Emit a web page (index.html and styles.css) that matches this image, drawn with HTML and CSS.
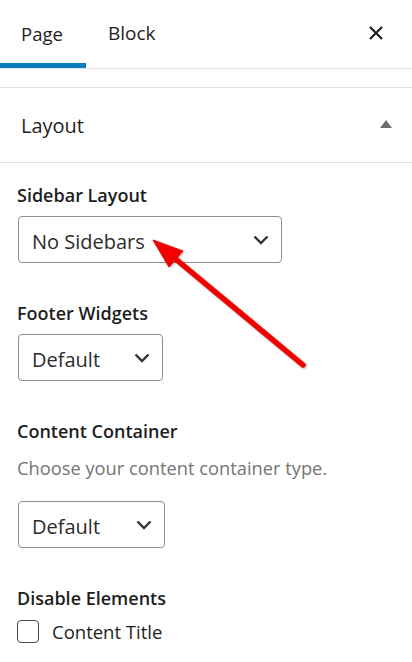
FILE: index.html
```html
<!DOCTYPE html>
<html lang="en">
<head>
<meta charset="utf-8">
<title>Page settings</title>
<link rel="stylesheet" href="styles.css">
</head>
<body>
<div class="sidebar">
  <div class="tabs">
    <div class="tab active">Page</div>
    <div class="tab">Block</div>
    <div class="close">
      <svg width="16" height="16" viewBox="0 0 16 16"><path d="M2 2 L14 14 M14 2 L2 14" stroke="#1e1e1e" stroke-width="2.2" fill="none"/></svg>
    </div>
  </div>
  <div class="spacer"></div>
  <div class="panel-head">
    <span class="panel-title">Layout</span>
    <svg class="caret" width="12" height="8" viewBox="0 0 12 8"><path d="M6 0 L12 8 L0 8 Z" fill="#6e6e6e"/></svg>
  </div>
  <div class="panel-body">
    <div class="field">
      <div class="label">Sidebar Layout</div>
      <div class="select wide"><span>No Sidebars</span><svg class="chev" width="16" height="10" viewBox="0 0 16 10"><path d="M1.5 1.5 L8 8 L14.5 1.5" stroke="#333" stroke-width="2.4" fill="none"/></svg></div>
    </div>
    <div class="field">
      <div class="label">Footer Widgets</div>
      <div class="select narrow"><span>Default</span><svg class="chev" width="16" height="10" viewBox="0 0 16 10"><path d="M1.5 1.5 L8 8 L14.5 1.5" stroke="#333" stroke-width="2.4" fill="none"/></svg></div>
    </div>
    <div class="field">
      <div class="label">Content Container</div>
      <div class="help">Choose your content container type.</div>
      <div class="select narrow2"><span>Default</span><svg class="chev" width="16" height="10" viewBox="0 0 16 10"><path d="M1.5 1.5 L8 8 L14.5 1.5" stroke="#333" stroke-width="2.4" fill="none"/></svg></div>
    </div>
    <div class="field">
      <div class="label">Disable Elements</div>
      <label class="check"><span class="box"></span><span>Content Title</span></label>
    </div>
  </div>
  <svg class="arrow" width="412" height="662" viewBox="0 0 412 662">
    <g fill="#f20000" stroke="#f20000">
      <line x1="303" y1="365" x2="172" y2="256" stroke-width="5.5" stroke-linecap="round"/>
      <polygon points="153,240 183,251 169,267" stroke-width="1" stroke-linejoin="round"/>
    </g>
  </svg>
</div>
</body>
</html>
```
FILE: styles.css
```css
* { box-sizing: border-box; }
html, body { margin: 0; padding: 0; background: #fff; }
body {
  font-family: "Open Sans", "Noto Sans", sans-serif;
  color: #1e1e1e;
  width: 412px;
  height: 662px;
  overflow: hidden;
}
.sidebar { position: relative; }
.tabs {
  display: flex;
  align-items: stretch;
  height: 69px;
  border-bottom: 1px solid #e0e0e0;
}
.tab {
  display: flex;
  align-items: center;
  padding: 0 22px 2px;
  font-size: 19px;
  color: #1e1e1e;
}
.tab.active {
  box-shadow: inset 0 -5px 0 #0a7cbb;
  padding: 0 22px 2px 21px;
  width: 86px;
  font-size: 18.5px;
}
.close {
  margin-left: auto;
  display: flex;
  align-items: center;
  justify-content: center;
  width: 30px;
  margin-right: 21px;
  padding-bottom: 2px;
}
.spacer { height: 18px; }
.panel-head {
  display: flex;
  align-items: center;
  justify-content: space-between;
  height: 76px;
  border-top: 1px solid #e0e0e0;
  border-bottom: 1px solid #e0e0e0;
  padding: 0 20px 0 21px;
}
.panel-title { font-size: 20px; color: #1e1e1e; }
.caret { margin-top: -3px; }
.panel-body { padding: 20px 0 0 17px; }
.field { margin-bottom: 38px; }
.label {
  font-size: 18px;
  font-weight: 600;
  line-height: 24px;
  margin-bottom: 9px;
  color: #1e1e1e;
}
.help {
  font-size: 18.3px;
  line-height: 24px;
  color: #757575;
  margin-top: 13px;
  margin-bottom: 21px;
}
.select {
  display: flex;
  align-items: center;
  justify-content: space-between;
  height: 47px;
  margin-left: 1px;
  border: 1px solid #8f8f8f;
  border-radius: 4px;
  padding: 3px 12px 0 13px;
  font-size: 20px;
  color: #2c2c2c;
}
.select.wide { width: 264px; }
.select.narrow { width: 145px; }
.select.narrow2 { width: 147px; }
.chev { margin-top: -2px; }
.check {
  display: flex;
  align-items: center;
  height: 24px;
  gap: 13px;
  font-size: 18.5px;
  color: #1e1e1e;
}
.box {
  width: 22px;
  height: 23px;
  border: 1.5px solid #4a4a4a;
  border-radius: 4px;
  flex: none;
}
.arrow {
  position: absolute;
  left: 0;
  top: 0;
  pointer-events: none;
  filter: drop-shadow(1px 1.5px 1px rgba(0,0,0,0.3));
}
```
